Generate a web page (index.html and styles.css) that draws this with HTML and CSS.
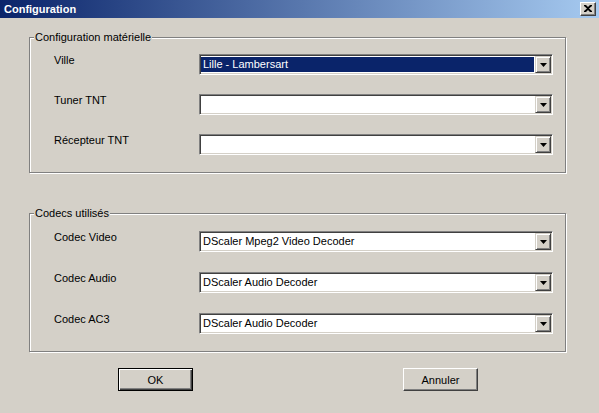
FILE: index.html
```html
<!DOCTYPE html>
<html>
<head>
<meta charset="utf-8">
<link rel="stylesheet" href="styles.css">
</head>
<body>
<div class="window">
  <div class="titlebar">
    <span class="title">Configuration</span>
    <div class="close">
      <svg width="8" height="7" viewBox="0 0 8 7"><path d="M0 0h2l2 2 2-2h2v1L5 3.5 8 6v1H6L4 5 2 7H0V6l3-2.5L0 1z" fill="#000"/></svg>
    </div>
  </div>
  <div class="content">
    <div class="group g1">
      <span class="legend">Configuration matérielle</span>
      <div class="row">
        <span class="label">Ville</span>
        <div class="combo">
          <div class="field"><span class="value selected">Lille - Lambersart</span></div>
          <div class="arrow"><svg width="7" height="4" viewBox="0 0 7 4"><path d="M0 0h7L3.5 4z" fill="#000"/></svg></div>
        </div>
      </div>
      <div class="row">
        <span class="label">Tuner TNT</span>
        <div class="combo">
          <div class="field"><span class="value"></span></div>
          <div class="arrow"><svg width="7" height="4" viewBox="0 0 7 4"><path d="M0 0h7L3.5 4z" fill="#000"/></svg></div>
        </div>
      </div>
      <div class="row">
        <span class="label">Récepteur TNT</span>
        <div class="combo">
          <div class="field"><span class="value"></span></div>
          <div class="arrow"><svg width="7" height="4" viewBox="0 0 7 4"><path d="M0 0h7L3.5 4z" fill="#000"/></svg></div>
        </div>
      </div>
    </div>
    <div class="group g2">
      <span class="legend">Codecs utilisés</span>
      <div class="row">
        <span class="label">Codec Video</span>
        <div class="combo">
          <div class="field"><span class="value">DScaler Mpeg2 Video Decoder</span></div>
          <div class="arrow"><svg width="7" height="4" viewBox="0 0 7 4"><path d="M0 0h7L3.5 4z" fill="#000"/></svg></div>
        </div>
      </div>
      <div class="row">
        <span class="label">Codec Audio</span>
        <div class="combo">
          <div class="field"><span class="value">DScaler Audio Decoder</span></div>
          <div class="arrow"><svg width="7" height="4" viewBox="0 0 7 4"><path d="M0 0h7L3.5 4z" fill="#000"/></svg></div>
        </div>
      </div>
      <div class="row">
        <span class="label">Codec AC3</span>
        <div class="combo">
          <div class="field"><span class="value">DScaler Audio Decoder</span></div>
          <div class="arrow"><svg width="7" height="4" viewBox="0 0 7 4"><path d="M0 0h7L3.5 4z" fill="#000"/></svg></div>
        </div>
      </div>
    </div>
    <div class="buttons">
      <button class="btn default">OK</button>
      <button class="btn">Annuler</button>
    </div>
  </div>
</div>
</body>
</html>
```
FILE: styles.css
```css
html, body {
  margin: 0;
  padding: 0;
  background: #d4d0c8;
}
.window {
  width: 599px;
  height: 413px;
  background: #d4d0c8;
  font-family: "Liberation Sans", Arial, sans-serif;
  font-size: 11px;
  color: #000;
  overflow: hidden;
}
.titlebar {
  height: 18px;
  display: flex;
  align-items: center;
  justify-content: space-between;
  padding: 0 3px 0 4px;
  background: linear-gradient(to right, #0a246a, #a6caf0);
  box-sizing: border-box;
  width: 599px;
}
.title {
  color: #fff;
  font-weight: bold;
  font-size: 11px;
  line-height: 13px;
}
.close {
  width: 16px;
  height: 14px;
  box-sizing: border-box;
  background: #d4d0c8;
  border: 1px solid;
  border-color: #fff #404040 #404040 #fff;
  box-shadow: inset -1px -1px #808080;
  display: flex;
  align-items: center;
  justify-content: center;
  padding: 0 1px 1px 0;
}
.close svg { display: block; }
.content {
  padding: 19px 0 0 29px;
}
.group {
  position: relative;
  width: 537px;
  box-sizing: border-box;
  border: 1px solid #808080;
  box-shadow: inset 1px 1px #fff, 1px 1px #fff;
  display: flex;
  flex-direction: column;
}
.g1 {
  padding: 16px 12px 17px 24px;
  gap: 19px;
}
.g2 {
  margin-top: 40px;
  padding: 17px 12px 17px 24px;
  gap: 20px;
}
.legend {
  position: absolute;
  top: -7px;
  left: 4px;
  padding: 0 1px;
  background: #d4d0c8;
  line-height: 13px;
  white-space: nowrap;
}
.row {
  display: flex;
  align-items: flex-start;
  height: 21px;
}
.label {
  width: 145px;
  flex: none;
  line-height: 13px;
  margin-top: 0;
}
.combo {
  width: 354px;
  height: 21px;
  box-sizing: border-box;
  border: 1px solid;
  border-color: #808080 #fff #fff #808080;
  box-shadow: inset 1px 1px #404040, inset -1px -1px #d4d0c8;
  background: #fff;
  display: flex;
  padding: 1px;
}
.field {
  flex: 1;
  padding: 1px 1px 1px 0;
  display: flex;
}
.value {
  flex: 1;
  line-height: 15px;
  padding-left: 2px;
  white-space: nowrap;
}
.value.selected {
  background: #0a246a;
  color: #fff;
}
.arrow {
  width: 16px;
  height: 17px;
  flex: none;
  box-sizing: border-box;
  background: #d4d0c8;
  border: 1px solid;
  border-color: #d4d0c8 #404040 #404040 #d4d0c8;
  box-shadow: inset 1px 1px #fff, inset -1px -1px #808080;
  display: flex;
  align-items: center;
  justify-content: center;
  padding-top: 1px;
}
.arrow svg { display: block; }
.buttons {
  display: flex;
  gap: 210px;
  margin: 16px 0 0 89px;
}
.btn {
  width: 75px;
  height: 23px;
  box-sizing: border-box;
  background: #d4d0c8;
  border: 1px solid;
  border-color: #fff #404040 #404040 #fff;
  box-shadow: inset -1px -1px #808080;
  font-family: "Liberation Sans", Arial, sans-serif;
  font-size: 11px;
  color: #000;
  padding: 0;
  margin: 0;
}
.btn.default {
  border-color: #000;
  box-shadow: inset 1px 1px #fff, inset -1px -1px #404040, inset -2px -2px #808080;
}
```
